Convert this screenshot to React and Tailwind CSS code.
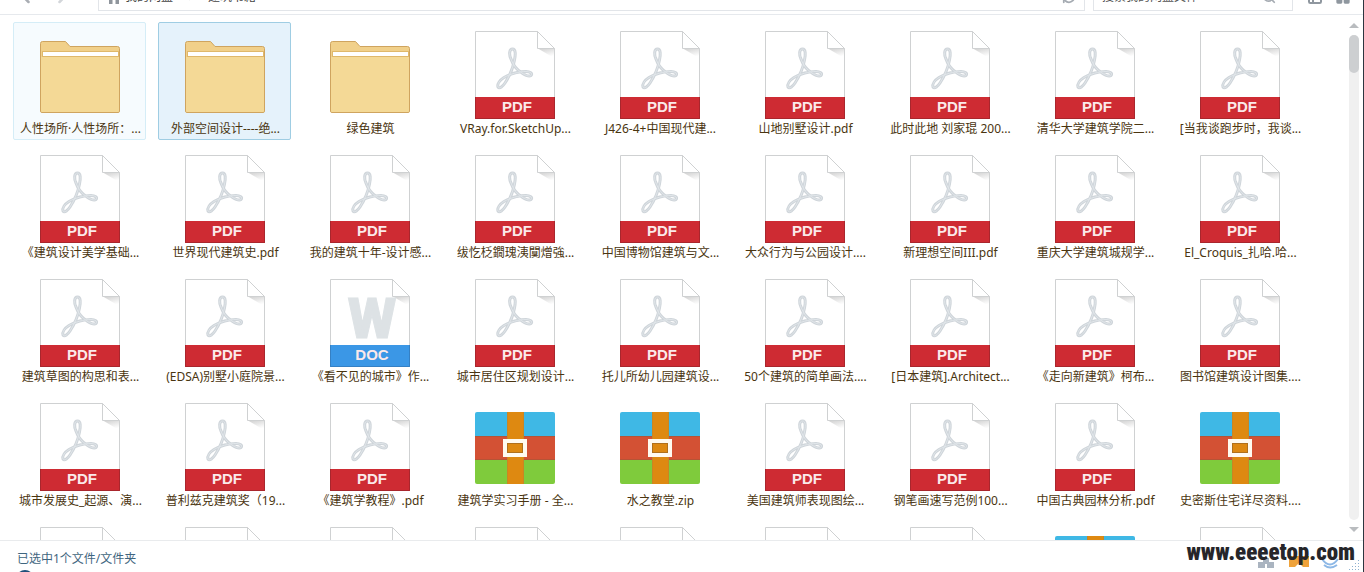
import React, { useState } from 'react';
import { ChevronLeft, ChevronRight, LayoutGrid, PanelLeft, RefreshCw, Search } from 'lucide-react';

const files = [
    { type: 'folder', name: '人性场所·人性场所：...' },
    { type: 'folder', name: '外部空间设计----绝...' },
    { type: 'folder', name: '绿色建筑' },
    { type: 'pdf', name: 'VRay.for.SketchUp...' },
    { type: 'pdf', name: 'J426-4+中国现代建...' },
    { type: 'pdf', name: '山地别墅设计.pdf' },
    { type: 'pdf', name: '此时此地 刘家琨 200...' },
    { type: 'pdf', name: '清华大学建筑学院二...' },
    { type: 'pdf', name: '[当我谈跑步时，我谈...' },
    { type: 'pdf', name: '《建筑设计美学基础...' },
    { type: 'pdf', name: '世界现代建筑史.pdf' },
    { type: 'pdf', name: '我的建筑十年-设计感...' },
    { type: 'pdf', name: '绂忔柉鐗瑰洟闃熷強...' },
    { type: 'pdf', name: '中国博物馆建筑与文...' },
    { type: 'pdf', name: '大众行为与公园设计....' },
    { type: 'pdf', name: '新理想空间III.pdf' },
    { type: 'pdf', name: '重庆大学建筑城规学...' },
    { type: 'pdf', name: 'El_Croquis_扎哈.哈...' },
    { type: 'pdf', name: '建筑草图的构思和表...' },
    { type: 'pdf', name: '(EDSA)别墅小庭院景...' },
    { type: 'doc', name: '《看不见的城市》作...' },
    { type: 'pdf', name: '城市居住区规划设计...' },
    { type: 'pdf', name: '托儿所幼儿园建筑设...' },
    { type: 'pdf', name: '50个建筑的简单画法....' },
    { type: 'pdf', name: '[日本建筑].Architect...' },
    { type: 'pdf', name: '《走向新建筑》柯布...' },
    { type: 'pdf', name: '图书馆建筑设计图集....' },
    { type: 'pdf', name: '城市发展史_起源、演...' },
    { type: 'pdf', name: '普利兹克建筑奖（19...' },
    { type: 'pdf', name: '《建筑学教程》.pdf' },
    { type: 'zip', name: '建筑学实习手册 - 全...' },
    { type: 'zip', name: '水之教堂.zip' },
    { type: 'pdf', name: '美国建筑师表现图绘...' },
    { type: 'pdf', name: '钢笔画速写范例100...' },
    { type: 'pdf', name: '中国古典园林分析.pdf' },
    { type: 'zip', name: '史密斯住宅详尽资料....' },
    { type: 'pdf', name: '' },
    { type: 'pdf', name: '' },
    { type: 'pdf', name: '' },
    { type: 'pdf', name: '' },
    { type: 'pdf', name: '' },
    { type: 'pdf', name: '' },
    { type: 'pdf', name: '' },
    { type: 'zip', name: '' },
    { type: 'pdf', name: '' },
];

const FolderIcon = () => (
    <svg width="80" height="88" viewBox="0 -10 80 88">
        <path d="M0.5 70V2.5Q0.5 0.5 2.5 0.5H25.5L30 5.5H77.5Q79.5 5.5 79.5 7.5V70Q79.5 71.5 78 71.5H2Q0.5 71.5 0.5 70Z" fill="#f1d08a" stroke="#cfa45f" />
        <path d="M1 16H79V69.5Q79 71 77.5 71H2.5Q1 71 1 69.5Z" fill="#f4d996" />
        <rect x="2.5" y="10.5" width="76" height="5" fill="#fff" stroke="#dfb86b" />
    </svg>
);

const ZipIcon = () => (
    <svg width="80" height="88" viewBox="0 -9 80 88">
        <path d="M0 24V2Q0 0 2 0H78Q80 0 80 2V24Z" fill="#3fb8e5" />
        <rect y="24" width="80" height="24" fill="#d35134" />
        <path d="M0 48H80V70Q80 72 78 72H2Q0 72 0 70Z" fill="#7fcb3c" />
        <path d="M0 24.5H80M0 47.5H80" stroke="#8a5a3a" strokeOpacity="0.4" />
        <rect x="32" width="17" height="72" fill="#de8911" />
        <path d="M32.5 0V72M48.5 0V72" stroke="#b98432" strokeOpacity="0.6" />
        <rect x="30" y="29" width="20" height="14" fill="#de8911" stroke="#fffaf0" strokeWidth="4" />
        <rect x="32.5" y="31.5" width="15" height="9" fill="none" stroke="#b0701c" />
    </svg>
);

const Sheet = ({ color, edge, label, children }) => (
    <svg width="80" height="88" viewBox="0 0 80 88">
        <defs>
            <linearGradient id="foldShade" x1="0" y1="0" x2="0.4" y2="1">
                <stop offset="0" stopColor="#cfcfcf" />
                <stop offset="1" stopColor="#fff" />
            </linearGradient>
        </defs>
        <path d="M0.5 88V0.5H62.5L79.5 17.5V88Z" fill="#fff" stroke="#cfd1d2" />
        <path d="M63 17.5H79V27Z" fill="url(#foldShade)" />
        <path d="M62.5 0.5V17.5H79.5Z" fill="#fff" stroke="#cfd1d2" />
        {children}
        <rect y="66" width="80" height="22" fill={color} />
        <path d="M0.5 66V87.5H79.5V66" fill="none" stroke={edge} />
        <text x="42" y="81" textAnchor="middle" fontSize="15" fontWeight="700" fill="#fbe9ea" fontFamily="'Liberation Sans', sans-serif">{label}</text>
    </svg>
);

const ACROBAT = 'M38.5 19C35 19 35 25 37 29C39 35 43 40 48 43C51 45 55 47 57 45.5C59 43.5 56 41.5 52 41.5C45 41.5 36 44 30 47.5C26 50 23 54 24 57C25.5 59.5 29 56 31 53C35 47 39 38 40.5 30C41.5 25 42 19 38.5 19Z';

const PdfIcon = () => (
    <Sheet color="#ce2b33" edge="#a9262d" label="PDF">
        <g transform="translate(-1 -1)" fill="none" strokeLinejoin="round">
            <path d={ACROBAT} stroke="#cfd5da" strokeWidth="3" />
            <path d={ACROBAT} stroke="#e1e6ea" strokeWidth="1" />
        </g>
    </Sheet>
);

const DocIcon = () => (
    <Sheet color="#3b97e6" edge="#3580c4" label="DOC">
        <text x="42" y="59" textAnchor="middle" fontSize="56" fontWeight="900" fill="#dde2e5" stroke="#dde2e5" fontFamily="Roboto, sans-serif">W</text>
    </Sheet>
);

const icons = { folder: FolderIcon, pdf: PdfIcon, doc: DocIcon, zip: ZipIcon };

const tileStyles = {
    idle: 'border-transparent',
    hover: 'border-[#d5edf7] bg-[#f6fbfe]',
    selected: 'border-[#9fcde3] bg-[#e5f2fb]',
};

const FileTile = ({ file, state, onClick }) => {
    const Icon = icons[file.type];
    return (
        <button onClick={onClick} className={`flex w-[133px] flex-col items-center rounded-xs border pt-2 ${tileStyles[state]}`}>
            <Icon />
            <span className="h-5 whitespace-nowrap pl-0.5 text-xs leading-5 text-[#4a3510]">{file.name}</span>
        </button>
    );
};

const Toolbar = () => (
    <header className="flex h-[15px] shrink-0 items-end border-b border-[#e6e9ed] pb-[3px]">
        <div className="flex w-[98px] shrink-0 gap-4 pb-1 pl-4">
            <button aria-label="后退"><ChevronLeft size={20} strokeWidth={3} className="text-[#a9adb3]" /></button>
            <button aria-label="前进"><ChevronRight size={20} strokeWidth={3} className="text-[#d3d6da]" /></button>
        </div>
        <nav className="flex h-[26px] flex-1 items-center border border-[#e2e5e9] px-2 pb-0.5 text-xs text-[#444]">
            <svg width="14" height="14" viewBox="0 0 14 14" className="mr-1">
                <path d="M7 0L0 7H2V14H5.5V9H8.5V14H12V7H14Z" fill="#8f959c" />
            </svg>
            <a href="#root">我的网盘</a>
            <ChevronRight size={9} className="mx-[13px] text-[#999]" />
            <a href="#books">建筑书籍</a>
            <button aria-label="刷新" className="ml-auto"><RefreshCw size={14} strokeWidth={3} className="text-[#a5abb2]" /></button>
        </nav>
        <div className="ml-2 flex h-[26px] w-[200px] shrink-0 items-center border border-[#e2e5e9] px-2 pb-0.5">
            <input aria-label="搜索" placeholder="搜索我的网盘文件" className="min-w-0 flex-1 text-xs outline-none placeholder:text-[#555]" />
            <Search size={14} strokeWidth={3} className="mr-2 text-[#a5abb2]" />
        </div>
        <div className="flex w-[70px] shrink-0 gap-3 pb-[6px] pl-3.5">
            <button aria-label="列表"><PanelLeft size={16} strokeWidth={3} className="text-[#8f979f]" /></button>
            <button aria-label="网格"><LayoutGrid size={16} className="fill-[#8f979f] text-[#8f979f]" /></button>
        </div>
    </header>
);

const ScrollBar = () => (
    <div className="flex w-[10px] shrink-0 flex-col items-center justify-between py-2">
        <svg width="10" height="5" viewBox="0 0 10 5"><path d="M0 5L5 0L10 5Z" fill="#b9bcbf" /></svg>
        <div className="my-[7px] w-full flex-1 rounded-full bg-[#f0f0f0]">
            <div className="h-[38px] rounded-full bg-[#cdcfd1]" />
        </div>
        <svg width="10" height="5" viewBox="0 0 10 5"><path d="M0 0L5 5L10 0Z" fill="#b9bcbf" /></svg>
    </div>
);

const StatusBar = () => (
    <footer className="relative flex h-8 shrink-0 items-start justify-between overflow-hidden border-t border-[#e9ebed] pl-[17px] pr-1">
        <div>
            <p className="pt-2 text-xs leading-5 text-[#3f6680]">已选中1个文件/文件夹</p>
            <svg width="18" height="18" viewBox="0 0 18 18" className="mt-px">
                <circle cx="8" cy="9" r="8" fill="#9cc8e6" stroke="#1f4f7a" strokeWidth="2" />
            </svg>
        </div>
        <svg width="102" height="20" viewBox="0 0 102 20" className="mt-[9px]">
            <path d="M1 12H8V18H1ZM10 12H17V18H10ZM6 8H12V14H6Z" fill="#aab4c0" />
            <path d="M32 6H52V17H46L42 13L38 17H32Z" fill="#efa23a" />
            <path d="M65 9Q73 20 81 9M67 15Q73 20 80 15" fill="none" stroke="#8db8e6" strokeWidth="2" />
            <path d="M101 10.5h1M98 13.5h1M101 13.5h1M95 16.5h1M98 16.5h1M101 16.5h1M92 19.5h1M95 19.5h1M98 19.5h1M101 19.5h1" stroke="#8db0d0" />
        </svg>
        <span className="absolute right-2 top-0 whitespace-nowrap font-['Roboto_Condensed','Liberation_Sans',sans-serif] text-[23px] font-black leading-6 text-[#26262a]">
            www.eeeetop.com
        </span>
    </footer>
);

const App = () => {
    const [selected, setSelected] = useState(1);
    const [hovered, setHovered] = useState(0);

    const getState = index => {
        if (index === selected) return 'selected';
        return index === hovered ? 'hover' : 'idle';
    };

    return (
        <div className="flex h-screen flex-col overflow-hidden border-r border-[#2c3640] bg-white font-['Noto_Sans','Noto_Sans_CJK_SC',sans-serif]">
            <Toolbar />
            <main className="flex min-h-0 flex-1 pr-1">
                <div className="flex flex-1 flex-wrap content-start gap-x-3 gap-y-[6px] overflow-hidden pl-[13px] pt-[7px]" onMouseLeave={() => setHovered(-1)}>
                    {files.map((file, i) => (
                        <FileTile key={i} file={file} state={getState(i)} onClick={() => setSelected(i)} />
                    ))}
                </div>
                <ScrollBar />
            </main>
            <StatusBar />
        </div>
    );
};

export default App;
